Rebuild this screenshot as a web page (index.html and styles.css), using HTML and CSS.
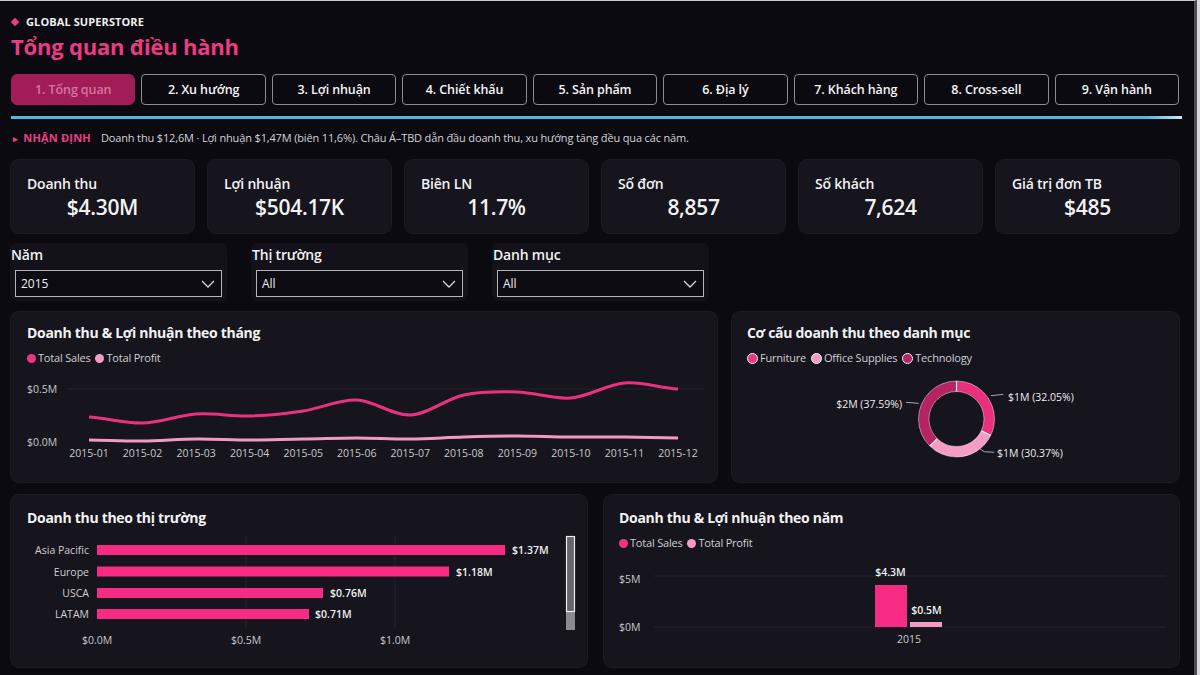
FILE: index.html
```html
<!DOCTYPE html>
<html lang="vi">
<head>
  <meta charset="UTF-8">
  <meta name="viewport" content="width=device-width, initial-scale=1">
  <title>Global Superstore – Tổng quan điều hành</title>
  <link rel="stylesheet" href="styles.css">
</head>
<body>
<div class="page">

  <header class="brand">
    <div class="eyebrow"><span class="diamond"></span>GLOBAL SUPERSTORE</div>
    <h1>Tổng quan điều hành</h1>
  </header>

  <!-- page tabs -->
  <nav class="tabs">
    <button class="tab active">1. Tổng quan</button>
    <button class="tab">2. Xu hướng</button>
    <button class="tab">3. Lợi nhuận</button>
    <button class="tab">4. Chiết khấu</button>
    <button class="tab">5. Sản phẩm</button>
    <button class="tab">6. Địa lý</button>
    <button class="tab">7. Khách hàng</button>
    <button class="tab">8. Cross-sell</button>
    <button class="tab">9. Vận hành</button>
  </nav>
  <div class="rule"></div>

  <p class="insight"><span class="tag"><span class="arrow">▸</span> NHẬN ĐỊNH</span>Doanh thu $12,6M · Lợi nhuận $1,47M (biên 11,6%). Châu Á–TBD dẫn đầu doanh thu, xu hướng tăng đều qua các năm.</p>

  <!-- KPI cards -->
  <section class="kpis">
    <div class="kpi"><div class="kpi-label">Doanh thu</div><div class="kpi-value">$4.30M</div></div>
    <div class="kpi"><div class="kpi-label">Lợi nhuận</div><div class="kpi-value">$504.17K</div></div>
    <div class="kpi"><div class="kpi-label">Biên LN</div><div class="kpi-value">11.7%</div></div>
    <div class="kpi"><div class="kpi-label">Số đơn</div><div class="kpi-value">8,857</div></div>
    <div class="kpi"><div class="kpi-label">Số khách</div><div class="kpi-value">7,624</div></div>
    <div class="kpi"><div class="kpi-label">Giá trị đơn TB</div><div class="kpi-value">$485</div></div>
  </section>

  <!-- slicers -->
  <section class="filters">
    <div class="filter">
      <div class="filter-label">Năm</div>
      <div class="select"><span>2015</span>
        <svg width="14" height="8" viewBox="0 0 14 8"><path d="M1 1l6 6 6-6" fill="none" stroke="#d4d4d8" stroke-width="1.3"/></svg>
      </div>
    </div>
    <div class="filter">
      <div class="filter-label">Thị trường</div>
      <div class="select"><span>All</span>
        <svg width="14" height="8" viewBox="0 0 14 8"><path d="M1 1l6 6 6-6" fill="none" stroke="#d4d4d8" stroke-width="1.3"/></svg>
      </div>
    </div>
    <div class="filter">
      <div class="filter-label">Danh mục</div>
      <div class="select"><span>All</span>
        <svg width="14" height="8" viewBox="0 0 14 8"><path d="M1 1l6 6 6-6" fill="none" stroke="#d4d4d8" stroke-width="1.3"/></svg>
      </div>
    </div>
  </section>

  <section class="row row-top">
    <!-- monthly sales / profit -->
    <div class="card">
      <h2>Doanh thu &amp; Lợi nhuận theo tháng</h2>
      <div class="legend">
        <span class="key"><i class="dot sales"></i>Total Sales</span>
        <span class="key"><i class="dot profit"></i>Total Profit</span>
      </div>
      <svg class="chart" width="676" height="98" viewBox="0 0 676 98">
        <line x1="40" y1="17" x2="676" y2="17" class="grid"/>
        <text x="0" y="21" class="axis">$0.5M</text>
        <text x="0" y="74" class="axis">$0.0M</text>
        <path class="line-sales" d="M62,45 C79.9,46 97.6,51.5 115.5,51 C133.4,50.5 151.2,43.2 169.1,42 C187,40.8 204.7,44.5 222.6,44 C240.5,43.5 258.3,41.7 276.2,39 C294.1,36.3 311.8,27.3 329.7,28 C347.6,28.7 365.4,43.8 383.3,43 C401.2,42.2 418.9,26.8 436.8,23 C454.7,19.2 472.5,19.5 490.4,20 C508.3,20.5 526,27.5 543.9,26 C561.8,24.5 579.6,12.5 597.5,11 C615.4,9.5 633.1,16 651,17"/>
        <path class="line-profit" d="M62,68 C79.9,68.2 97.6,69.2 115.5,69 C133.4,68.8 151.2,67.2 169.1,67 C187,66.8 204.7,68 222.6,68 C240.5,68 258.3,67.2 276.2,67 C294.1,66.8 311.8,66 329.7,66 C347.6,66 365.4,67.2 383.3,67 C401.2,66.8 418.9,65.5 436.8,65 C454.7,64.5 472.5,64 490.4,64 C508.3,64 526,65 543.9,65 C561.8,65 579.6,64.8 597.5,65 C615.4,65.2 633.1,65.8 651,66"/>
        <g class="axis" text-anchor="middle">
          <text x="62" y="85">2015-01</text>
          <text x="115.5" y="85">2015-02</text>
          <text x="169.1" y="85">2015-03</text>
          <text x="222.6" y="85">2015-04</text>
          <text x="276.2" y="85">2015-05</text>
          <text x="329.7" y="85">2015-06</text>
          <text x="383.3" y="85">2015-07</text>
          <text x="436.8" y="85">2015-08</text>
          <text x="490.4" y="85">2015-09</text>
          <text x="543.9" y="85">2015-10</text>
          <text x="597.5" y="85">2015-11</text>
          <text x="651" y="85">2015-12</text>
        </g>
      </svg>
    </div>

    <!-- category share donut -->
    <div class="card card-donut">
      <h2>Cơ cấu doanh thu theo danh mục</h2>
      <div class="legend">
        <span class="key"><i class="dot ring furniture"></i>Furniture</span>
        <span class="key"><i class="dot ring office"></i>Office Supplies</span>
        <span class="key"><i class="dot ring tech"></i>Technology</span>
      </div>
      <svg class="chart" width="419" height="98" viewBox="0 0 419 98">
        <g transform="rotate(-90 209.5 47)" fill="none" stroke-width="10.5">
          <circle cx="209.5" cy="47" r="32.75" stroke="#ea2f7e" stroke-dasharray="65.95 205.77"/>
          <circle cx="209.5" cy="47" r="32.75" stroke="#f59cc4" stroke-dasharray="62.49 205.77" stroke-dashoffset="-65.95"/>
          <circle cx="209.5" cy="47" r="32.75" stroke="#b42462" stroke-dasharray="77.35 205.77" stroke-dashoffset="-128.44"/>
        </g>
        <circle cx="209.5" cy="47" r="38" class="edge"/>
        <circle cx="209.5" cy="47" r="27.5" class="edge"/>
        <g class="sep">
          <line x1="209.5" y1="19.5" x2="209.5" y2="9"/>
          <line x1="234.35" y1="58.79" x2="243.83" y2="63.29"/>
          <line x1="190.16" y1="66.55" x2="182.77" y2="74.01"/>
        </g>
        <g class="leader">
          <polyline points="244,23.7 256.3,22.3"/>
          <polyline points="233,77 237.3,79.7 247.3,80.3"/>
          <polyline points="159,30.3 171.7,31.3"/>
        </g>
        <text x="261" y="28.5" class="pie-label">$1M (32.05%)</text>
        <text x="250" y="84.5" class="pie-label">$1M (30.37%)</text>
        <text x="155" y="36" class="pie-label" text-anchor="end">$2M (37.59%)</text>
      </svg>
    </div>
  </section>

  <section class="row row-bottom">
    <!-- sales by market -->
    <div class="card">
      <h2>Doanh thu theo thị trường</h2>
      <svg class="chart bars" width="546" height="115" viewBox="0 0 546 115">
        <line x1="219" y1="0" x2="219" y2="92" class="grid"/>
        <line x1="368" y1="0" x2="368" y2="92" class="grid"/>
        <g class="cat" text-anchor="end">
          <text x="62" y="18">Asia Pacific</text>
          <text x="62" y="39.5">Europe</text>
          <text x="62" y="61">USCA</text>
          <text x="62" y="82">LATAM</text>
        </g>
        <rect x="70" y="9" width="408" height="10" class="bar"/>
        <rect x="70" y="30.5" width="352" height="10" class="bar"/>
        <rect x="70" y="52" width="226" height="10" class="bar"/>
        <rect x="70" y="73" width="212" height="10" class="bar"/>
        <g class="val">
          <text x="485" y="18">$1.37M</text>
          <text x="429" y="39.5">$1.18M</text>
          <text x="303" y="61">$0.76M</text>
          <text x="288" y="82">$0.71M</text>
        </g>
        <g class="axis" text-anchor="middle">
          <text x="70" y="108">$0.0M</text>
          <text x="219" y="108">$0.5M</text>
          <text x="368" y="108">$1.0M</text>
        </g>
        <rect x="539" y="0" width="9" height="94" class="track"/>
        <rect x="539.5" y="0.5" width="8" height="75" class="thumb"/>
      </svg>
    </div>

    <!-- yearly sales / profit -->
    <div class="card card-year">
      <h2>Doanh thu &amp; Lợi nhuận theo năm</h2>
      <div class="legend">
        <span class="key"><i class="dot sales"></i>Total Sales</span>
        <span class="key"><i class="dot profit"></i>Total Profit</span>
      </div>
      <svg class="chart" width="547" height="100" viewBox="0 0 547 100">
        <line x1="35" y1="20" x2="547" y2="20" class="grid"/>
        <line x1="35" y1="71" x2="547" y2="71" class="grid"/>
        <text x="0" y="26.5" class="axis">$5M</text>
        <text x="0" y="75" class="axis">$0M</text>
        <rect x="256" y="29" width="32" height="42" class="bar"/>
        <rect x="291" y="66" width="32" height="5" class="bar-light"/>
        <g class="val" text-anchor="middle">
          <text x="271.5" y="20">$4.3M</text>
          <text x="307.5" y="57.5">$0.5M</text>
        </g>
        <text x="290" y="86.5" class="axis" text-anchor="middle">2015</text>
      </svg>
    </div>
  </section>

</div>
</body>
</html>
```

FILE: styles.css
```css
* {
  box-sizing: border-box;
}

html {
  background: #d9d9de;
}

body {
  margin: 0;
  font-family: "Open Sans", "Noto Sans", sans-serif;
  color: #f2f2f4;
}

.page {
  width: 1197px;
  height: 675px;
  padding-left: 10px;
  background: #0b0a10;
  border-top: 1px solid #c9c9cf;
  border-right: 3px solid #4d4c54;
  overflow: hidden;
}

/* header */
.eyebrow {
  display: flex;
  align-items: center;
  gap: 8px;
  padding: 14px 0 0 2px;
  font-size: 11px;
  line-height: 14px;
  font-weight: 700;
  color: #efeff2;
  letter-spacing: 0.1px;
}

.diamond {
  width: 6px;
  height: 6px;
  background: #ee3d86;
  transform: rotate(45deg);
}

h1 {
  margin: 3px 0 0 1px;
  font-size: 22px;
  line-height: 28px;
  font-weight: 700;
  color: #ec3a83;
  letter-spacing: -0.2px;
}

/* tabs */
.tabs {
  display: grid;
  grid-template-columns: repeat(9, 1fr);
  gap: 6px;
  width: 1168px;
  margin: 14px 0 0 1px;
}

.tab {
  height: 31px;
  font-family: inherit;
  font-size: 12.5px;
  font-weight: 600;
  color: #f4f4f6;
  background: #0b0a10;
  border: 1px solid #8d8c94;
  border-radius: 4px;
  letter-spacing: -0.1px;
}

.tab.active {
  background: #a11d57;
  border-color: #a11d57;
  border-radius: 6px;
  color: #d874a0;
}

.rule {
  width: 1171px;
  height: 3px;
  margin: 11px 0 0 1px;
  background: linear-gradient(to right, #58b3d6 97%, #cfe9f3);
}

.insight {
  margin: 11px 0 0 3px;
  font-size: 11px;
  line-height: 16px;
  color: #d4d4d8;
  letter-spacing: -0.15px;
}

.tag {
  margin-right: 10px;
  font-weight: 700;
  color: #ee3d86;
  letter-spacing: 0.2px;
}

.arrow {
  font-size: 9px;
  margin-right: 2px;
}

/* KPI cards */
.kpis {
  display: grid;
  grid-template-columns: repeat(6, 1fr);
  gap: 12px;
  width: 1170px;
  margin-top: 12px;
}

.kpi {
  height: 75px;
  padding: 15px 16px 0;
  background: #16141c;
  border: 1px solid #1c1a23;
  border-radius: 9px;
}

.kpi-label {
  font-size: 14px;
  line-height: 18px;
  font-weight: 600;
  letter-spacing: -0.2px;
}

.kpi-value {
  font-size: 21px;
  line-height: 28px;
  font-weight: 600;
  text-align: center;
  letter-spacing: -0.3px;
}

/* slicers */
.filters {
  display: flex;
  gap: 24px;
  margin-top: 9px;
}

.filter {
  flex: 0 0 217px;
  height: 58px;
  padding: 3px 5px 0 1px;
  background: #131119;
  border-radius: 6px;
}

.filter-label {
  font-size: 14px;
  line-height: 18px;
  font-weight: 600;
  letter-spacing: -0.2px;
}

.select {
  display: flex;
  align-items: center;
  justify-content: space-between;
  height: 27px;
  margin: 6px 0 0 4px;
  padding: 0 6px 0 5px;
  font-size: 12px;
  color: #ececf0;
  background: #0d0c12;
  border: 1px solid #b4b4ba;
}

/* chart cards */
.row {
  display: grid;
  width: 1170px;
}

.row-top {
  grid-template-columns: 708px 1fr;
  gap: 13px;
  height: 172px;
  margin-top: 10px;
}

.row-bottom {
  grid-template-columns: 578px 1fr;
  gap: 15px;
  height: 174px;
  margin-top: 11px;
}

.card {
  padding: 11px 16px 0;
  background: #16141c;
  border: 1px solid #1d1b24;
  border-radius: 9px;
  overflow: hidden;
}

.card-donut,
.card-year {
  padding-left: 15px;
  padding-right: 15px;
}

.row-bottom .card {
  padding-top: 13px;
}

h2 {
  margin: 0;
  font-size: 14px;
  line-height: 20px;
  font-weight: 700;
  letter-spacing: -0.3px;
}

.legend {
  display: flex;
  gap: 5px;
  margin-top: 7px;
  font-size: 11px;
  line-height: 16px;
  color: #cfcfd4;
  letter-spacing: -0.2px;
}

.key {
  display: flex;
  align-items: center;
  gap: 2px;
}

.dot {
  display: block;
  width: 9px;
  height: 9px;
  border-radius: 50%;
}

.dot.ring {
  width: 11px;
  height: 11px;
  border: 1.5px solid #f4f4f6;
}

.sales,
.furniture {
  background: #ee3483;
}

.profit,
.office {
  background: #f49bc3;
}

.tech {
  background: #b42462;
}

.chart {
  display: block;
  margin-top: 6px;
  overflow: visible;
}

.card-year .chart {
  margin-top: 5px;
}

.bars {
  margin-top: 8px;
}

/* svg parts */
.grid {
  stroke: #25232d;
  stroke-width: 1;
}

.axis {
  font-size: 10.5px;
  fill: #c9c9cf;
}

.line-sales {
  fill: none;
  stroke: #e8327f;
  stroke-width: 3;
}

.line-profit {
  fill: none;
  stroke: #f29ac1;
  stroke-width: 3;
}

.edge {
  fill: none;
  stroke: rgba(255, 255, 255, 0.55);
  stroke-width: 0.8;
}

.sep line {
  stroke: #f4f4f6;
  stroke-width: 1.2;
}

.leader polyline {
  fill: none;
  stroke: #a9a9b0;
  stroke-width: 1;
}

.pie-label {
  font-size: 10.5px;
  fill: #ececf0;
}

.cat {
  font-size: 10.5px;
  fill: #cfcfd4;
}

.bar {
  fill: #f72a84;
}

.bar-light {
  fill: #f49bc3;
}

.val {
  font-size: 10.5px;
  font-weight: 600;
  fill: #f0f0f3;
}

.track {
  fill: #8a8a90;
}

.thumb {
  fill: #66666c;
  stroke: #ececf0;
  stroke-width: 1.2;
}
```
